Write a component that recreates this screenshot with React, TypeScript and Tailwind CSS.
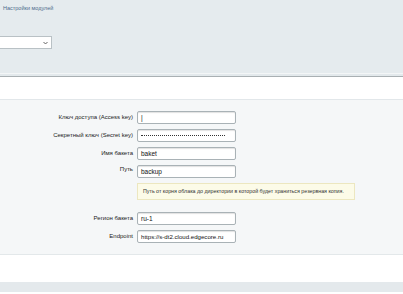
import React from "react";

function Row({ label, value, password, small, top }: { label: string; value: string; password?: boolean; small?: boolean; top?: boolean }) {
  return (
    <div className="flex items-center h-[13px]">
      <div className={`w-[137px] pr-[4px] text-right text-[6px] text-[#222] ${top ? "-mt-[4px]" : ""}`}>{label}</div>
      <div className={`w-[99px] h-[13px] border border-[#a9b2b6] rounded-[2px] bg-white shadow-[inset_0_1px_1px_rgba(0,0,0,0.12)] flex items-center px-[3px] text-[#111] whitespace-nowrap overflow-hidden ${small ? "text-[6.1px]" : "text-[6.5px]"}`}>
        {password ? <div className="w-[84px] border-t border-dotted border-[#333]" /> : value}
      </div>
    </div>
  );
}

export default function App() {
  return (
    <div className="w-[403px] h-[294px] overflow-hidden bg-white" style={{ fontFamily: '"Liberation Sans", Arial, sans-serif' }}>
      <div className="h-[73px] bg-[#e5ebee] relative">
        <div className="pt-[4px] pl-[3px] text-[5.5px] text-[#4d6c8c]">Настройки модулей</div>
        <div className="mt-[24px] w-[52px] h-[13px] bg-white border border-[#b9c1c5] border-l-0 flex items-center justify-end pr-[3px]">
          <svg width="5" height="4" viewBox="0 0 5 4"><path d="M0.5 1 L2.5 3 L4.5 1" stroke="#555" strokeWidth="0.9" fill="none" /></svg>
        </div>
      </div>
      <div className="h-[1px] bg-[#f3f6f7]" />
      <div className="h-[2px] bg-[#e3e9ec]" />
      <div className="h-[1px] bg-[#a9b0b3]" />
      <div className="h-[23px] bg-white border-b border-[#e2e7ea]" />
      <div className="h-[155px] bg-[#f5f7f8] border-b border-[#e3e8ea] pt-[11px] flex flex-col">
        <div className="flex flex-col gap-[5px]">
          <Row label="Ключ доступа (Access key)" value="|" />
          <Row label="Секретный ключ (Secret key)" value="" password />
          <Row label="Имя бакета" value="baket" />
          <Row label="Путь" value="backup" top />
        </div>
        <div className="ml-[137px] mt-[5px] w-[218px] h-[17px] bg-[#fcfbe8] border border-[#ece7c0] flex items-center px-[5px] text-[5.3px] text-[#333] whitespace-nowrap">
          Путь от корня облака до директории в которой будет храниться резервная копия.
        </div>
        <div className="flex flex-col gap-[5px] mt-[12px]">
          <Row label="Регион бакета" value="ru-1" />
          <Row label="Endpoint" value="https://s-dt2.cloud.edgecore.ru" small />
        </div>
      </div>
      <div className="h-[27px] bg-white" />
      <div className="h-[10px] bg-[#e4e9ec]" />
    </div>
  );
}
